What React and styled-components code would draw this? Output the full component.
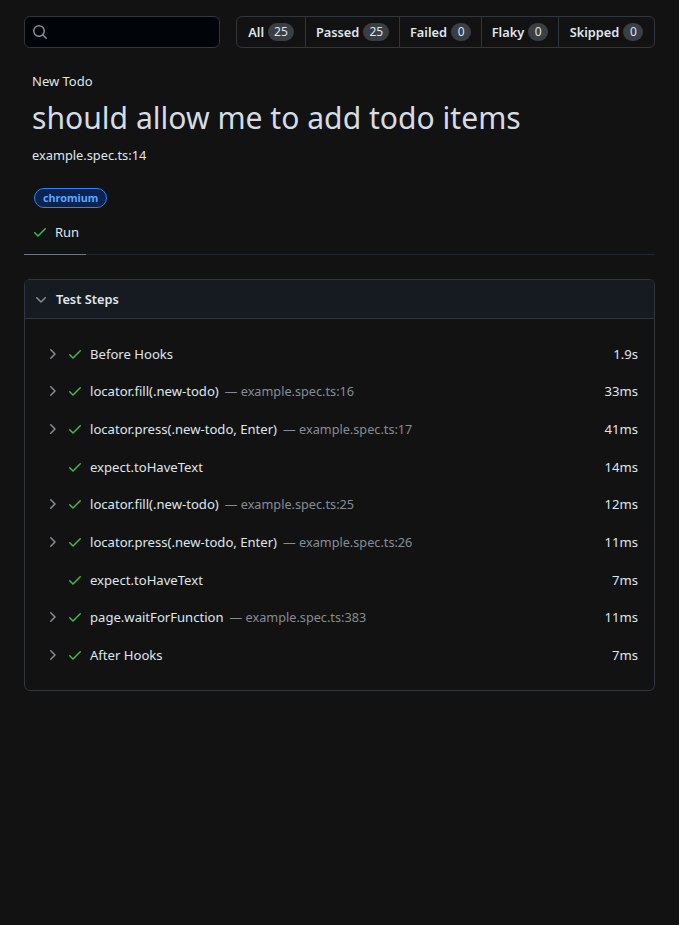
import React from "react";
import styled, { createGlobalStyle } from "styled-components";

const GlobalStyle = createGlobalStyle`
  html, body {
    margin: 0;
    padding: 0;
    background-color: #121212;
    color: #f0f6fc;
    font-family: "Noto Sans", "Open Sans", sans-serif;
    font-size: 13px;
  }
`;

const Page = styled.div`
  padding: 16px 24px;
  min-height: 925px;
  box-sizing: border-box;
`;

const TopBar = styled.div`
  display: flex;
  gap: 16px;
  height: 32px;
`;

const SearchBox = styled.div`
  flex: none;
  width: 196px;
  box-sizing: border-box;
  display: flex;
  align-items: center;
  padding-left: 7px;
  background: #010409;
  border: 1px solid #30363d;
  border-radius: 6px;
  color: #848d97;
`;

const FilterNav = styled.nav`
  flex: 1;
  display: flex;
  border: 1px solid #30363d;
  border-radius: 6px;
`;

const FilterItem = styled.div`
  flex: none;
  width: ${(p) => p.$width}px;
  box-sizing: border-box;
  display: flex;
  align-items: center;
  justify-content: center;
  gap: 4px;
  font-size: 12.8px;
  font-weight: 600;
  color: #dfe6ec;
  border-left: ${(p) => (p.$first ? "none" : "1px solid #30363d")};
`;

const Count = styled.span`
  display: inline-block;
  min-width: 20px;
  padding: 0 6px;
  box-sizing: border-box;
  height: 18px;
  line-height: 18px;
  border-radius: 10px;
  text-align: center;
  background: #3a3f46;
  color: #dfe6ec;
  font-size: 12px;
  font-weight: 400;
`;

const Header = styled.header`
  padding: 0 8px;
`;

const Suite = styled.div`
  margin-top: 23px;
  line-height: 20px;
  font-size: 13px;
  color: #dfe6ec;
`;

const Title = styled.h1`
  margin: 7px 0 0;
  font-size: 30.1px;
  font-weight: 400;
  line-height: 40px;
  color: #d5dce3;
`;

const Location = styled.div`
  margin-top: 7px;
  line-height: 20px;
  font-size: 12.8px;
  color: #dfe6ec;
`;

const Badge = styled.span`
  display: inline-block;
  margin: 23px 0 0 2px;
  height: 20px;
  box-sizing: border-box;
  padding: 0 8px;
  line-height: 18px;
  border: 1px solid #2f81f7;
  border-radius: 10px;
  background: #0a2350;
  color: #58a6ff;
  font-size: 10.8px;
  font-weight: 700;
`;

const Tabs = styled.div`
  margin-top: 4px;
  height: 43px;
  box-sizing: border-box;
  display: flex;
  border-bottom: 1px solid #21262d;
`;

const Tab = styled.div`
  width: 62px;
  height: 43px;
  box-sizing: border-box;
  padding: 0 0 2px 8px;
  display: flex;
  align-items: center;
  gap: 7px;
  font-size: 13px;
  color: #dfe6ec;
  border-bottom: 1px solid #6e7681;
`;

const Card = styled.section`
  margin-top: 24px;
  border: 1px solid #30363d;
  border-radius: 6px;
  overflow: hidden;
`;

const CardHeader = styled.div`
  height: 38px;
  display: flex;
  align-items: center;
  gap: 7px;
  padding-left: 8px;
  background: #161b22;
  border-bottom: 1px solid #30363d;
  color: #dfe6ec;
  font-size: 12.8px;
  font-weight: 600;
`;

const CardBody = styled.div`
  padding: 16px 16px 16px 19px;
`;

const Row = styled.div`
  height: 37.625px;
  display: flex;
  align-items: center;
  color: #dfe6ec;
  font-size: 13.1px;
`;

const ChevronSlot = styled.span`
  flex: none;
  width: 20px;
  height: 16px;
  display: flex;
  color: #848d97;
`;

const CheckSlot = styled.span`
  flex: none;
  width: 26px;
  height: 16px;
  padding-left: 3px;
  box-sizing: border-box;
  display: flex;
`;

const StepName = styled.span`
  white-space: nowrap;
`;

const StepSource = styled.span`
  margin-left: 6px;
  color: #848d97;
  font-size: 12.7px;
  white-space: nowrap;
`;

const Duration = styled.span`
  margin-left: auto;
`;

const Icon = styled.svg`
  display: block;
  flex: none;
  fill: ${(p) => p.$color || "currentColor"};
`;

const CheckIcon = () => (
  <Icon width="16" height="16" viewBox="0 0 16 16" $color="#3fb950">
    <path d="M13.78 4.22a.75.75 0 010 1.06l-7.25 7.25a.75.75 0 01-1.06 0L2.22 9.28a.75.75 0 011.06-1.06L6 10.94l6.72-6.72a.75.75 0 011.06 0z" />
  </Icon>
);

const ChevronRight = () => (
  <Icon width="16" height="16" viewBox="0 0 16 16">
    <path d="M6.22 3.22a.75.75 0 011.06 0l4.25 4.25a.75.75 0 010 1.06l-4.25 4.25a.75.75 0 01-1.06-1.06L9.94 8 6.22 4.28a.75.75 0 010-1.06z" />
  </Icon>
);

const ChevronDown = () => (
  <Icon width="16" height="16" viewBox="0 0 16 16" $color="#848d97">
    <path d="M12.78 6.22a.75.75 0 010 1.06l-4.25 4.25a.75.75 0 01-1.06 0L3.22 7.28a.75.75 0 011.06-1.06L8 9.94l3.72-3.72a.75.75 0 011.06 0z" />
  </Icon>
);

const SearchIcon = () => (
  <Icon width="16" height="16" viewBox="0 0 16 16">
    <path d="M10.68 11.74a6 6 0 0 1-7.922-8.982 6 6 0 0 1 8.982 7.922l3.04 3.04a.749.749 0 0 1-.326 1.275.749.749 0 0 1-.734-.215ZM11.5 7a4.499 4.499 0 1 0-8.997 0A4.499 4.499 0 0 0 11.5 7Z" />
  </Icon>
);

const filters = [
  { label: "All", count: 25, width: 68 },
  { label: "Passed", count: 25, width: 94 },
  { label: "Failed", count: 0, width: 82 },
  { label: "Flaky", count: 0, width: 77 },
  { label: "Skipped", count: 0, width: 96 },
];

const steps = [
  { name: "Before Hooks", time: "1.9s", expandable: true },
  { name: "locator.fill(.new-todo)", source: "example.spec.ts:16", time: "33ms", expandable: true },
  { name: "locator.press(.new-todo, Enter)", source: "example.spec.ts:17", time: "41ms", expandable: true },
  { name: "expect.toHaveText", time: "14ms" },
  { name: "locator.fill(.new-todo)", source: "example.spec.ts:25", time: "12ms", expandable: true },
  { name: "locator.press(.new-todo, Enter)", source: "example.spec.ts:26", time: "11ms", expandable: true },
  { name: "expect.toHaveText", time: "7ms" },
  { name: "page.waitForFunction", source: "example.spec.ts:383", time: "11ms", expandable: true },
  { name: "After Hooks", time: "7ms", expandable: true },
];

export default function App() {
  return (
    <Page>
      <GlobalStyle />
      <TopBar>
        <SearchBox>
          <SearchIcon />
        </SearchBox>
        <FilterNav>
          {filters.map((f, i) => (
            <FilterItem key={f.label} $first={i === 0} $width={f.width}>
              {f.label} <Count>{f.count}</Count>
            </FilterItem>
          ))}
        </FilterNav>
      </TopBar>
      <Header>
        <Suite>New Todo</Suite>
        <Title>should allow me to add todo items</Title>
        <Location>example.spec.ts:14</Location>
        <Badge>chromium</Badge>
      </Header>
      <Tabs>
        <Tab>
          <CheckIcon />
          Run
        </Tab>
      </Tabs>
      <Card>
        <CardHeader>
          <ChevronDown />
          Test Steps
        </CardHeader>
        <CardBody>
          {steps.map((s, i) => (
            <Row key={i}>
              <ChevronSlot>{s.expandable && <ChevronRight />}</ChevronSlot>
              <CheckSlot>
                <CheckIcon />
              </CheckSlot>
              <StepName>{s.name}</StepName>
              {s.source && <StepSource>— {s.source}</StepSource>}
              <Duration>{s.time}</Duration>
            </Row>
          ))}
        </CardBody>
      </Card>
    </Page>
  );
}
